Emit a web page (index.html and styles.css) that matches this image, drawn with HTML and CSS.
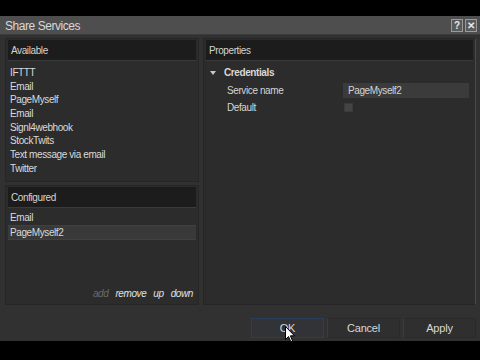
FILE: index.html
```html
<!DOCTYPE html>
<html>
<head>
<meta charset="utf-8">
<link rel="stylesheet" href="styles.css">
</head>
<body>
<div class="window">
  <div class="titlebar">
    <span class="title">Share Services</span>
    <div class="tbtns">
      <span class="tbtn">?</span>
      <span class="tbtn x">✕</span>
    </div>
  </div>
  <div class="content">
    <div class="leftcol">
      <div class="panel avail">
        <div class="phead">Available</div>
        <ul class="list">
          <li>IFTTT</li>
          <li>Email</li>
          <li>PageMyself</li>
          <li>Email</li>
          <li>Signl4webhook</li>
          <li>StockTwits</li>
          <li>Text message via email</li>
          <li>Twitter</li>
        </ul>
      </div>
      <div class="panel conf">
        <div class="phead">Configured</div>
        <ul class="list">
          <li>Email</li>
          <li class="sel">PageMyself2</li>
        </ul>
        <div class="actions">
          <span class="dis">add</span>
          <span>remove</span>
          <span>up</span>
          <span>down</span>
        </div>
      </div>
    </div>
    <div class="panel props">
      <div class="phead">Properties</div>
      <div class="group"><span class="tri"></span>Credentials</div>
      <div class="prow">
        <span class="plabel">Service name</span>
        <span class="pval input">PageMyself2</span>
      </div>
      <div class="prow">
        <span class="plabel">Default</span>
        <span class="pval"><span class="check"></span></span>
      </div>
    </div>
  </div>
  <div class="buttons">
    <span class="btn ok">OK</span>
    <span class="btn">Cancel</span>
    <span class="btn">Apply</span>
    <svg class="cursor" width="11" height="17" viewBox="0 0 11 17"><path d="M0.5 0.5 L0.5 13.5 L3.5 10.5 L5.8 15.8 L7.6 15 L5.4 9.8 L9.5 9.8 Z" fill="#fff" stroke="#000" stroke-width="1"/></svg>
  </div>
</div>
</body>
</html>
```
FILE: styles.css
```css
html, body {
  margin: 0;
  padding: 0;
  background: #000;
  width: 480px;
  height: 360px;
  overflow: hidden;
  font-family: "Liberation Sans", Arial, sans-serif;
  letter-spacing: -0.4px;
}
.window {
  margin-top: 16px;
  height: 325px;
  background: #313131;
  display: flex;
  flex-direction: column;
  position: relative;
}
.titlebar {
  height: 18px;
  background: #4e4e4e;
  border-bottom: 1px solid #3c3c3c;
  display: flex;
  align-items: center;
  justify-content: space-between;
  padding: 0 3px 0 5px;
}
.title {
  color: #d8d8d8;
  font-size: 12px;
  letter-spacing: -0.45px;
  padding-top: 2px;
}
.tbtns {
  display: flex;
  gap: 2px;
}
.tbtn {
  width: 10px;
  height: 11px;
  border: 1px solid #9a9a9a;
  background: #5a5a5a;
  color: #e8e8e8;
  font-size: 10px;
  font-weight: bold;
  line-height: 11px;
  text-align: center;
  letter-spacing: 0;
}
.content {
  display: flex;
  gap: 4px;
  padding: 3px 4px 0 5px;
  height: 267px;
}
.leftcol {
  width: 194px;
  display: flex;
  flex-direction: column;
  gap: 3px;
}
.panel {
  background: #2c2c2c;
  border: 1px solid #262626;
  padding: 1px 2px;
  box-sizing: border-box;
}
.avail { height: 144px; }
.conf { flex: 1; display: flex; flex-direction: column; }
.props { flex: 1; border-right: 1px solid #4a4a4a; }
.phead {
  background: #1c1c1c;
  color: #d4d4d4;
  font-size: 10px;
  height: 20px;
  line-height: 21px;
  padding-left: 3px;
  border-bottom: 1px solid #3a3a3a;
}
.list {
  list-style: none;
  margin: 5px 0 0 0;
  padding: 0;
}
.list li {
  color: #dadada;
  font-size: 10px;
  height: 13.7px;
  line-height: 13.7px;
  padding-left: 2px;
}
.conf .list { margin-top: 3px; }
.list li.sel {
  background: #393939;
  border-top: 1px solid #414141;
  border-bottom: 1px solid #414141;
}
.actions {
  margin-top: auto;
  margin-bottom: 4px;
  display: flex;
  justify-content: flex-end;
  gap: 7px;
  padding-right: 3px;
  font-size: 10px;
  font-style: italic;
  color: #e2e2e2;
}
.actions .dis { color: #6a6a6a; }
.group {
  color: #d8d8d8;
  font-size: 10px;
  font-weight: bold;
  margin: 5px 0 0 4px;
  display: flex;
  align-items: center;
  height: 13px;
}
.tri {
  width: 0;
  height: 0;
  border-left: 3.5px solid transparent;
  border-right: 3.5px solid transparent;
  border-top: 4px solid #c8c8c8;
  margin-right: 8px;
}
.prow {
  display: flex;
  align-items: center;
  height: 17px;
  margin-left: 21px;
}
.group + .prow { margin-top: 3px; }
.plabel {
  color: #d4d4d4;
  font-size: 10px;
  width: 116px;
}
.pval {
  flex: 1;
  margin-right: 4px;
  height: 15px;
  display: flex;
  align-items: center;
}
.input {
  background: #3b3b3b;
  color: #d4d4d4;
  font-size: 10px;
  padding-left: 5px;
}
.check {
  width: 7px;
  height: 7px;
  background: #444;
  border: 1px solid #3a3a3a;
  margin-left: 1px;
}
.buttons {
  display: flex;
  justify-content: flex-end;
  gap: 3px;
  padding: 13px 4px 0 0;
  position: relative;
}
.btn {
  width: 73px;
  height: 20px;
  box-sizing: border-box;
  border: 1px solid #2a2a2a;
  border-left-color: #3c3c3c;
  background: #2f2f2f;
  color: #d8d8d8;
  font-size: 11px;
  letter-spacing: -0.2px;
  display: flex;
  align-items: center;
  justify-content: center;
}
.btn.ok {
  border: 1px solid #2b3d5a;
  background: #313337;
}
.cursor {
  position: absolute;
  left: 285px;
  top: 21px;
}
```
